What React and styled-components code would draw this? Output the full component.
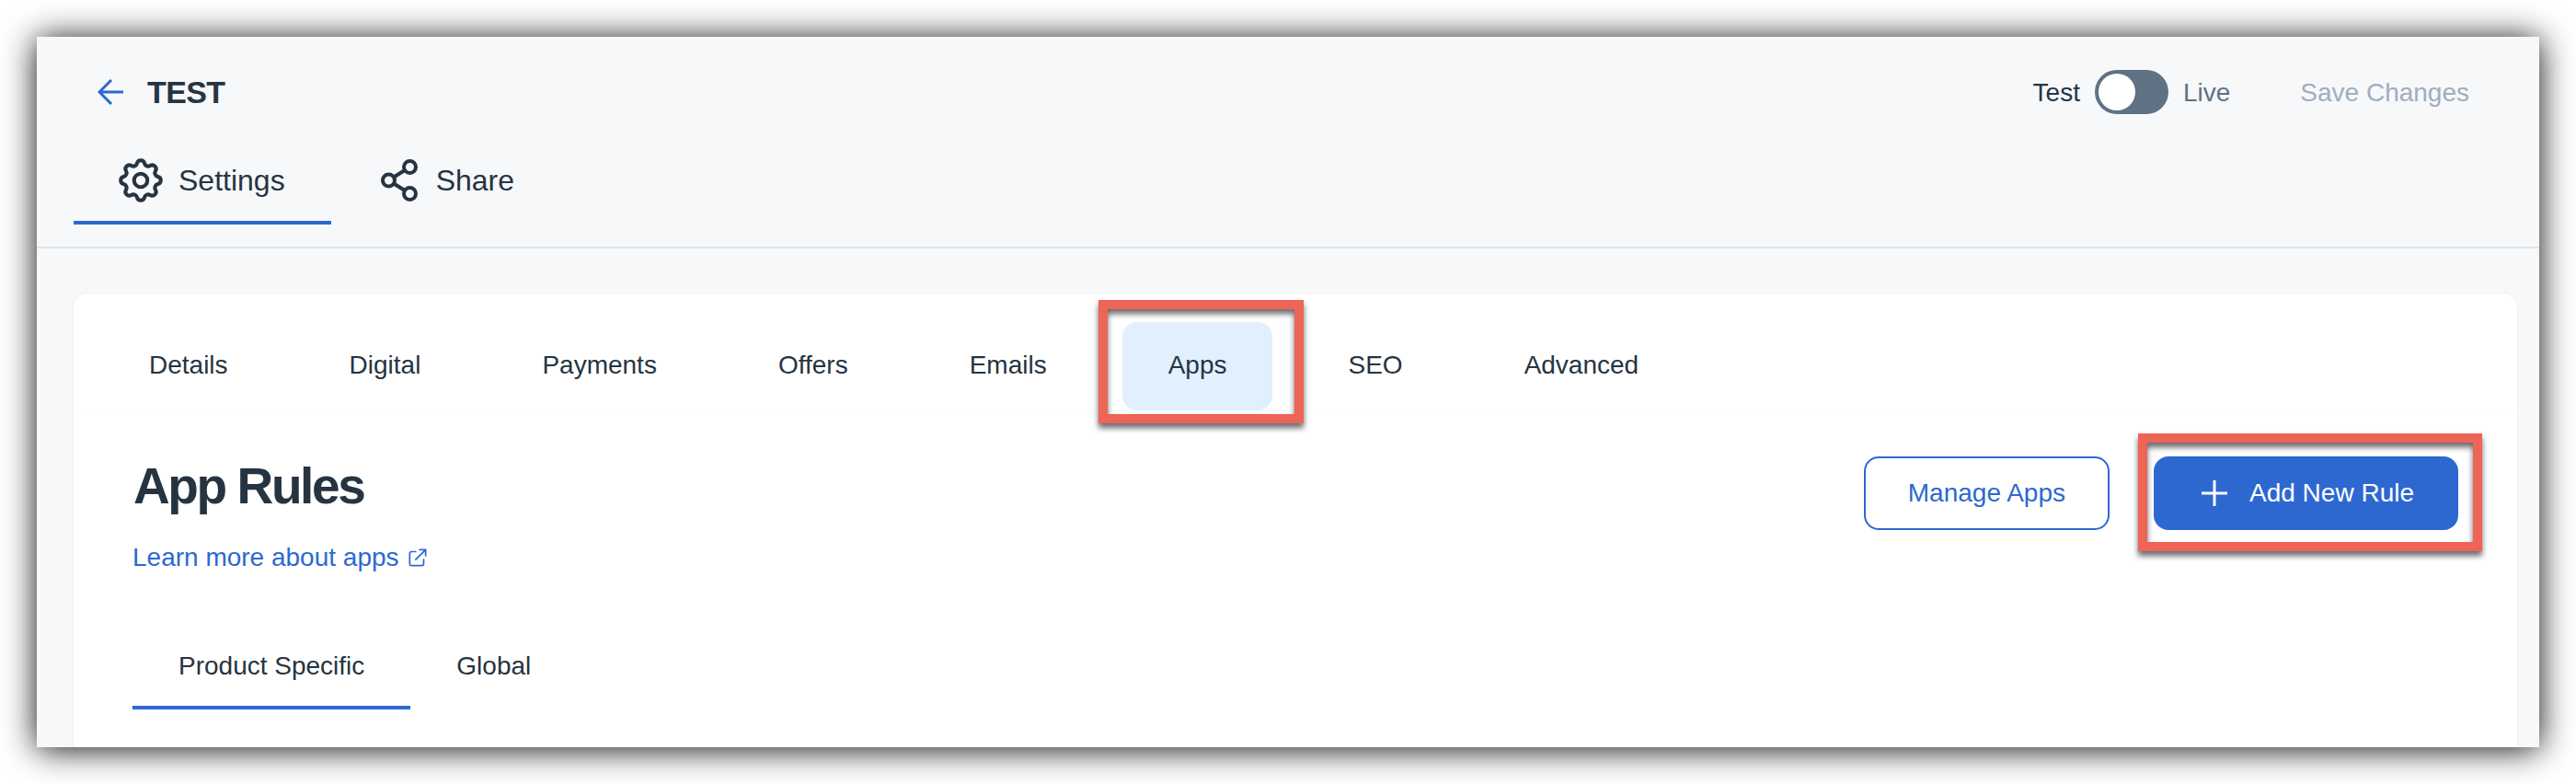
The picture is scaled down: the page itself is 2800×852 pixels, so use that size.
import React from "react";
import styled, { createGlobalStyle } from "styled-components";
import { HiOutlineCog, HiOutlineExternalLink } from "react-icons/hi";

const dark = "#263442";
const blue = "#2d68d1";

const SETTINGS_TABS = ["Details", "Digital", "Payments", "Offers", "Emails", "Apps", "SEO", "Advanced"];

const ShareIcon = () => (
  <svg width="48" height="48" viewBox="0 0 48 48" fill="none" stroke="currentColor" strokeWidth="4">
    <circle cx="12.5" cy="24" r="6.5" />
    <circle cx="35.5" cy="9.5" r="6.5" />
    <circle cx="35.5" cy="38.5" r="6.5" />
    <path d="M18 20.5 L30 13 M18 27.5 L30 35" />
  </svg>
);

export default function App() {
  return (
    <>
      <GlobalStyle />
      <Frame>
        <Header>
          <TopRow>
            <TitleGroup>
              <BackArrow viewBox="0 0 28 28" fill="none">
                <path d="M15 1 L2 14 L15 27 M2 14 H28" />
              </BackArrow>
              <PageName>TEST</PageName>
            </TitleGroup>
            <Actions>
              <ModeLabel>Test</ModeLabel>
              <Toggle>
                <Knob />
              </Toggle>
              <ModeLabel $muted>Live</ModeLabel>
              <SaveButton>Save Changes</SaveButton>
            </Actions>
          </TopRow>
          <NavTabs>
            <NavTab $active $lead={44} $gap={12}>
              <HiOutlineCog size={58} strokeWidth={1.7} />
              Settings
            </NavTab>
            <NavTab $lead={50} $gap={16}>
              <ShareIcon />
              Share
            </NavTab>
          </NavTabs>
        </Header>
        <Card>
          <PillTabs>
            {SETTINGS_TABS.map((name) => (
              <PillTab key={name} $active={name === "Apps"}>
                {name}
                {name === "Apps" && <Callout $l={26} $r={34} $t={24} $b={14} />}
              </PillTab>
            ))}
          </PillTabs>
          <RulesHead>
            <div>
              <Title>App Rules</Title>
              <LearnLink>
                Learn more about apps
                <HiOutlineExternalLink size={26} />
              </LearnLink>
            </div>
            <ButtonGroup>
              <OutlineButton>Manage Apps</OutlineButton>
              <PrimaryButton>
                <svg width="28" height="28" viewBox="0 0 28 28" fill="none" stroke="currentColor" strokeWidth="3">
                  <path d="M14 0 V28 M0 14 H28" />
                </svg>
                Add New Rule
                <Callout $l={17} $r={26} $t={25} $b={23} />
              </PrimaryButton>
            </ButtonGroup>
          </RulesHead>
          <SubTabs>
            <SubTab $active>Product Specific</SubTab>
            <SubTab>Global</SubTab>
          </SubTabs>
        </Card>
      </Frame>
    </>
  );
}

////////////////////////// CSS //////////////////////////
const GlobalStyle = createGlobalStyle`
  html, body {
    margin: 0;
    background: #fff;
  }
  body {
    font-family: "Liberation Sans", Arial, sans-serif;
    color: ${dark};
  }
  * {
    box-sizing: border-box;
  }
`;

const Frame = styled.div`
  margin: 40px;
  height: 772px;
  background: #f6f8fa;
  box-shadow: 0 2px 34px rgba(0, 0, 0, 0.95);
  display: flex;
  flex-direction: column;
`;

const Header = styled.header`
  height: 230px;
  flex: none;
  padding: 36px 0 0 40px;
  border-bottom: 2px solid #e0e3e9;
`;

const TopRow = styled.div`
  display: flex;
  justify-content: space-between;
  align-items: center;
  height: 48px;
  padding-right: 76px;
`;

const TitleGroup = styled.div`
  display: flex;
  align-items: center;
  gap: 26px;
  padding-left: 26px;
`;

const BackArrow = styled.svg`
  width: 28px;
  height: 28px;
  stroke: ${blue};
  stroke-width: 3;
`;

const PageName = styled.h2`
  margin: 0;
  font-size: 34px;
  font-weight: 700;
  letter-spacing: -0.6px;
`;

const Actions = styled.div`
  display: flex;
  align-items: center;
  font-size: 28px;
`;

const ModeLabel = styled.span`
  padding-top: 2px;
  color: ${(p) => (p.$muted ? "#5f7284" : dark)};
`;

const Toggle = styled.div`
  width: 80px;
  height: 48px;
  margin: 0 16px;
  padding: 4px;
  border-radius: 24px;
  background: #5f7284;
`;

const Knob = styled.div`
  width: 40px;
  height: 40px;
  border-radius: 50%;
  background: #fff;
`;

const SaveButton = styled.span`
  margin-left: 76px;
  padding-top: 2px;
  color: #a0aebd;
`;

const NavTabs = styled.nav`
  display: flex;
  margin-top: 28px;
`;

const NavTab = styled.div`
  display: flex;
  align-items: center;
  gap: ${(p) => p.$gap}px;
  height: 92px;
  padding: 0 50px 0 ${(p) => p.$lead}px;
  font-size: 32px;
  border-bottom: 4px solid ${(p) => (p.$active ? blue : "transparent")};

  svg {
    flex: none;
  }
`;

const Card = styled.main`
  flex: 1;
  margin: 48px 23px 0 39px;
  background: #fff;
  border: 1px solid #f0f1f4;
  border-bottom: 0;
  border-radius: 16px 16px 0 0;
`;

const PillTabs = styled.div`
  display: flex;
  gap: 32px;
  padding: 31px 32px 0;
  border-bottom: 1px solid #fafbfb;
`;

const PillTab = styled.div`
  position: relative;
  display: flex;
  align-items: center;
  height: 96px;
  padding: 0 50px 3px;
  font-size: 28px;
  border-radius: 16px;
  background: ${(p) => (p.$active ? "#e1effe" : "transparent")};
`;

const Callout = styled.span`
  position: absolute;
  top: -${(p) => p.$t}px;
  bottom: -${(p) => p.$b}px;
  left: -${(p) => p.$l}px;
  right: -${(p) => p.$r}px;
  border: 10px solid #ec6557;
  filter: drop-shadow(0 5px 3px rgba(0, 0, 0, 0.6));
`;

const RulesHead = styled.div`
  display: flex;
  justify-content: space-between;
  align-items: flex-start;
  padding: 49px 64px 0 65px;
`;

const Title = styled.h1`
  margin: 0;
  font-size: 55px;
  line-height: 64px;
  font-weight: 700;
  letter-spacing: -2.4px;
`;

const LearnLink = styled.a`
  display: flex;
  align-items: center;
  gap: 7px;
  margin: 26px 0 0 -1px;
  font-size: 28px;
  line-height: 40px;
  color: ${blue};

  svg {
    stroke-width: 1.6;
  }
`;

const ButtonGroup = styled.div`
  display: flex;
  gap: 48px;
`;

const OutlineButton = styled.div`
  display: flex;
  align-items: center;
  height: 80px;
  padding: 0 46px;
  font-size: 28px;
  color: ${blue};
  background: #fff;
  border: 2px solid ${blue};
  border-radius: 16px;
`;

const PrimaryButton = styled.div`
  position: relative;
  display: flex;
  align-items: center;
  gap: 24px;
  height: 80px;
  padding: 0 48px 0 52px;
  font-size: 28px;
  color: #fff;
  background: ${blue};
  border-radius: 16px;
`;

const SubTabs = styled.div`
  display: flex;
  margin: 49px 0 0 64px;
`;

const SubTab = styled.div`
  display: flex;
  align-items: center;
  height: 96px;
  padding: 6px 50px 0;
  font-size: 28px;
  border-bottom: 4px solid ${(p) => (p.$active ? blue : "transparent")};
`;
